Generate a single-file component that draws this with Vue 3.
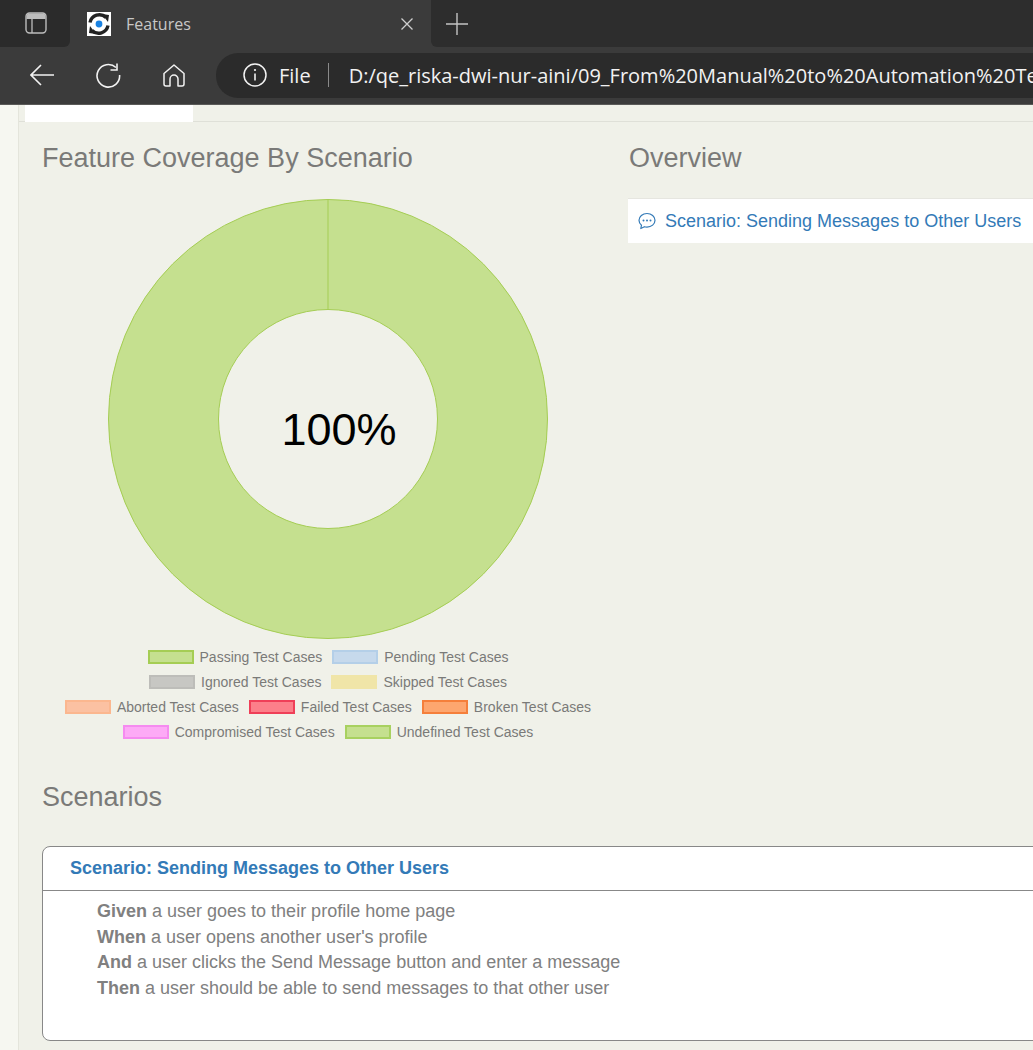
<script setup>
const legendRows = [
  [
    { label: 'Passing Test Cases', fill: '#c5e08f', line: '#a5cd54' },
    { label: 'Pending Test Cases', fill: '#c6d9ec', line: '#b4cfe8' },
  ],
  [
    { label: 'Ignored Test Cases', fill: '#c7c7c3', line: '#bdbdb9' },
    { label: 'Skipped Test Cases', fill: '#f0e5a8', line: '#f0e5a8' },
  ],
  [
    { label: 'Aborted Test Cases', fill: '#fbc1a2', line: '#fbb78f' },
    { label: 'Failed Test Cases', fill: '#fc7f8a', line: '#ef3f58' },
    { label: 'Broken Test Cases', fill: '#fda66f', line: '#f57f3b' },
  ],
  [
    { label: 'Compromised Test Cases', fill: '#fdaaf6', line: '#f58bf0' },
    { label: 'Undefined Test Cases', fill: '#c5e08f', line: '#a8d160' },
  ],
]
const steps = [
  { key: 'Given', text: 'a user goes to their profile home page' },
  { key: 'When', text: "a user opens another user's profile" },
  { key: 'And', text: 'a user clicks the Send Message button and enter a message' },
  { key: 'Then', text: 'a user should be able to send messages to that other user' },
]
</script>

<template>
  <div class="page">
    <header class="browser">
      <div class="strip">
        <div class="strip-left">
          <svg class="ico-panel" width="22" height="22" viewBox="0 0 22 22" fill="none">
            <rect x="1" y="1" width="20" height="20" rx="3.5" stroke="#bdbdbd" stroke-width="1.4" />
            <path d="M1.5 4.5a3 3 0 0 1 3-3h13a3 3 0 0 1 3 3V7h-19z" fill="#bdbdbd" />
            <path d="M7 7v14" stroke="#bdbdbd" stroke-width="1.3" />
          </svg>
        </div>
        <div class="tab-active">
          <svg class="favicon" width="24" height="24" viewBox="0 0 24 24">
            <rect width="24" height="24" fill="#fff" />
            <path d="M3 10.5A9.5 9.5 0 0 1 19 5.5" fill="none" stroke="#222" stroke-width="3.4" />
            <path d="M21 13.5A9.5 9.5 0 0 1 5 18.5" fill="none" stroke="#222" stroke-width="3.4" />
            <path d="M15 2l7 1-1 7z" fill="#222" />
            <path d="M9 22l-7-1 1-7z" fill="#222" />
            <circle cx="12" cy="12" r="3.4" fill="#1a82e2" />
          </svg>
          <span class="tab-title">Features</span>
          <svg class="ico-close" width="12" height="12" viewBox="0 0 12 12">
            <path d="M.5.5l11 11M11.500.5l-11 11" stroke="#cfcfcf" stroke-width="1.3" />
          </svg>
        </div>
        <div class="strip-right">
          <svg width="22" height="22" viewBox="0 0 22 22">
            <path d="M11 0v22M0 11h22" stroke="#c4c4c4" stroke-width="1.4" />
          </svg>
        </div>
      </div>
      <div class="toolbar">
        <svg class="ico-back" width="24" height="22" viewBox="0 0 24 22" fill="none">
          <path d="M24 11H1.500M11 1L1 11l10 10" stroke="#f2f2f2" stroke-width="1.6" />
        </svg>
        <svg class="ico-reload" width="25" height="25" viewBox="0 0 25 25" fill="none">
          <path d="M20 4.500A11.300 11.300 0 1 0 23.600 12" stroke="#f2f2f2" stroke-width="1.6" />
          <path d="M21 .500v6.500h-6.500" stroke="#f2f2f2" stroke-width="1.6" />
        </svg>
        <svg class="ico-home" width="22" height="23" viewBox="0 0 22 23" fill="none">
          <path d="M1 9.500L11 1l10 8.500V20a2 2 0 0 1-2 2h-4v-7a3.500 3.500 0 0 0-8 0v7H3a2 2 0 0 1-2-2z" stroke="#f2f2f2" stroke-width="1.5" stroke-linejoin="round" />
        </svg>
        <div class="address">
          <svg class="ico-info" width="24" height="24" viewBox="0 0 24 24" fill="none">
            <circle cx="12" cy="12" r="11" stroke="#f2f2f2" stroke-width="1.5" />
            <path d="M12 10.500v7" stroke="#f2f2f2" stroke-width="1.6" />
            <circle cx="12" cy="7" r="1.100" fill="#f2f2f2" />
          </svg>
          <span class="scheme">File</span>
          <span class="divider"></span>
          <span class="url">D:/qe_riska-dwi-nur-aini/09_From%20Manual%20to%20Automation%20Testing</span>
        </div>
      </div>
    </header>

    <div class="content">
      <div class="tabs"><div class="tab-white"></div></div>

      <div class="columns">
        <section class="coverage">
          <h2 class="heading">Feature Coverage By Scenario</h2>
          <div class="chart">
            <svg width="442" height="442" viewBox="0 0 442 442">
              <circle cx="221" cy="221" r="164.500" fill="none" stroke="#c5e08f" stroke-width="110" />
              <circle cx="221" cy="221" r="219.500" fill="none" stroke="#a5cd54" stroke-width="1" />
              <circle cx="221" cy="221" r="109.500" fill="none" stroke="#a5cd54" stroke-width="1" />
              <path d="M221 2v110" stroke="#a5cd54" stroke-width="1" />
            </svg>
            <div class="percent">100%</div>
          </div>
          <div class="legend">
            <div v-for="(row, r) in legendRows" :key="r" class="legend-row">
              <div v-for="item in row" :key="item.label" class="legend-item">
                <span class="swatch" :style="{ background: item.fill, borderColor: item.line }"></span>
                <span>{{ item.label }}</span>
              </div>
            </div>
          </div>
        </section>

        <section class="overview">
          <h2 class="heading">Overview</h2>
          <div class="overview-card">
            <svg width="18" height="18" viewBox="0 0 18 18" fill="none">
              <path d="M9 1.500c4.400 0 8 2.900 8 6.800s-3.600 6.800-8 6.800c-.9 0-1.800-.1-2.600-.4L2.800 16.500l.7-3.300C1.900 12 1 10.300 1 8.300 1 4.400 4.600 1.500 9 1.500z" stroke="#337ab7" stroke-width="1.200" stroke-linejoin="round" />
              <circle cx="5.500" cy="8.500" r="1" fill="#337ab7" />
              <circle cx="9" cy="8.500" r="1" fill="#337ab7" />
              <circle cx="12.500" cy="8.500" r="1" fill="#337ab7" />
            </svg>
            <span>Scenario: Sending Messages to Other Users</span>
          </div>
        </section>
      </div>

      <h2 class="heading scenarios-heading">Scenarios</h2>
      <article class="scenario">
        <div class="scenario-title">Scenario: Sending Messages to Other Users</div>
        <div class="scenario-body">
          <p v-for="step in steps" :key="step.key" class="step"><b>{{ step.key }}</b> {{ step.text }}</p>
        </div>
      </article>
    </div>
  </div>
</template>

<style>
html, body { margin: 0; overflow: hidden; }
</style>

<style scoped>
.page {
  width: 1033px;
  height: 1050px;
  overflow: hidden;
  display: flex;
  flex-direction: column;
  background: #f6f7f1;
  font-family: "Liberation Sans", Arial, sans-serif;
}
.browser {
  flex: none;
  height: 105px;
  background: #3b3b3b;
  font-family: "Open Sans", "Noto Sans", sans-serif;
  border-bottom: 1px solid #5a5a58;
  box-sizing: border-box;
}
.strip { display: flex; height: 47px; }
.strip-left {
  width: 70px;
  background: #2b2b2b;
  border-bottom-right-radius: 6px;
  display: flex;
  align-items: flex-start;
  padding: 12px 0 0 25px;
  box-sizing: border-box;
}
.tab-active {
  width: 361px;
  display: flex;
  align-items: center;
  padding: 0 18px 0 17px;
  box-sizing: border-box;
  border-radius: 8px 8px 0 0;
}
.favicon { flex: none; }
.tab-title { margin-left: 15px; font-size: 16px; color: #c8c8c8; flex: 1; }
.strip-right {
  flex: 1;
  background: #2d2d2d;
  border-bottom-left-radius: 6px;
  display: flex;
  align-items: center;
  padding-left: 15px;
}
.toolbar { display: flex; align-items: center; height: 57px; padding-left: 30px; box-sizing: border-box; padding-bottom: 1px; }
.ico-back { flex: none; }
.ico-reload { flex: none; margin-left: 42px; }
.ico-home { flex: none; margin-left: 42px; }
.address {
  flex: none;
  margin-left: 31px;
  width: 900px;
  height: 45px;
  border-radius: 22px 0 0 22px;
  background: #2b2b2b;
  display: flex;
  align-items: center;
  padding-left: 27px;
  box-sizing: border-box;
  color: #f2f2f2;
  white-space: nowrap;
}
.ico-info { flex: none; }
.scheme { margin-left: 12px; font-size: 20px; }
.divider { width: 1px; height: 24px; background: #8a8a8a; margin: 0 20px 0 17px; flex: none; }
.url { font-size: 20px; }

.content {
  flex: 1;
  margin-left: 18px;
  border-left: 1px solid #e4e5dc;
  background: #f0f1e9;
  padding-left: 23px;
  overflow: hidden;
}
.tabs {
  height: 17px;
  margin-left: -23px;
  padding-left: 6px;
  border-bottom: 1px solid #dfe0d8;
  box-sizing: border-box;
}
.tab-white { width: 168px; height: 17px; background: #fff; }
.columns { display: grid; grid-template-columns: 572px 1fr; column-gap: 14px; width: 1000px; }
.heading {
  margin: 0;
  font-size: 27px;
  font-weight: 400;
  line-height: 40px;
  color: #7a7a78;
}
.coverage .heading, .overview .heading { margin-top: 16px; }
.chart { position: relative; display: flex; justify-content: center; height: 442px; margin-top: 20px; }
.percent {
  position: absolute;
  left: 0;
  right: 0;
  top: 206px;
  padding-left: 22px;
  text-align: center;
  font-size: 45px;
  line-height: 52px;
  color: #000;
}
.legend { margin-top: 4px; }
.legend-row {
  display: flex;
  justify-content: center;
  gap: 10px;
  height: 25px;
  align-items: center;
  font-size: 14px;
  color: #7a7a78;
}
.legend-item { display: flex; align-items: center; gap: 6px; }
.swatch { width: 46px; height: 14px; border: 2px solid; box-sizing: border-box; flex: none; }
.overview .heading { padding-left: 1px; }
.overview-card {
  margin-top: 20px;
  height: 45px;
  background: #fff;
  border-top: 1px solid #e6e6e0;
  box-sizing: border-box;
  display: flex;
  align-items: center;
  gap: 9px;
  padding-left: 10px;
  font-size: 18px;
  color: #337ab7;
  white-space: nowrap;
}
.scenarios-heading { margin-top: 33px; }
.scenario {
  margin-top: 29px;
  width: 1040px;
  height: 195px;
  background: #fff;
  border: 1px solid #888;
  border-radius: 8px;
  box-sizing: border-box;
}
.scenario-title {
  height: 44px;
  line-height: 42px;
  padding-left: 27px;
  border-bottom: 1px solid #888;
  box-sizing: border-box;
  font-size: 18px;
  font-weight: 700;
  color: #337ab7;
}
.scenario-body { padding: 8px 0 0 54px; }
.step { margin: 0; font-size: 18px; line-height: 25.7px; color: #808080; }
</style>
